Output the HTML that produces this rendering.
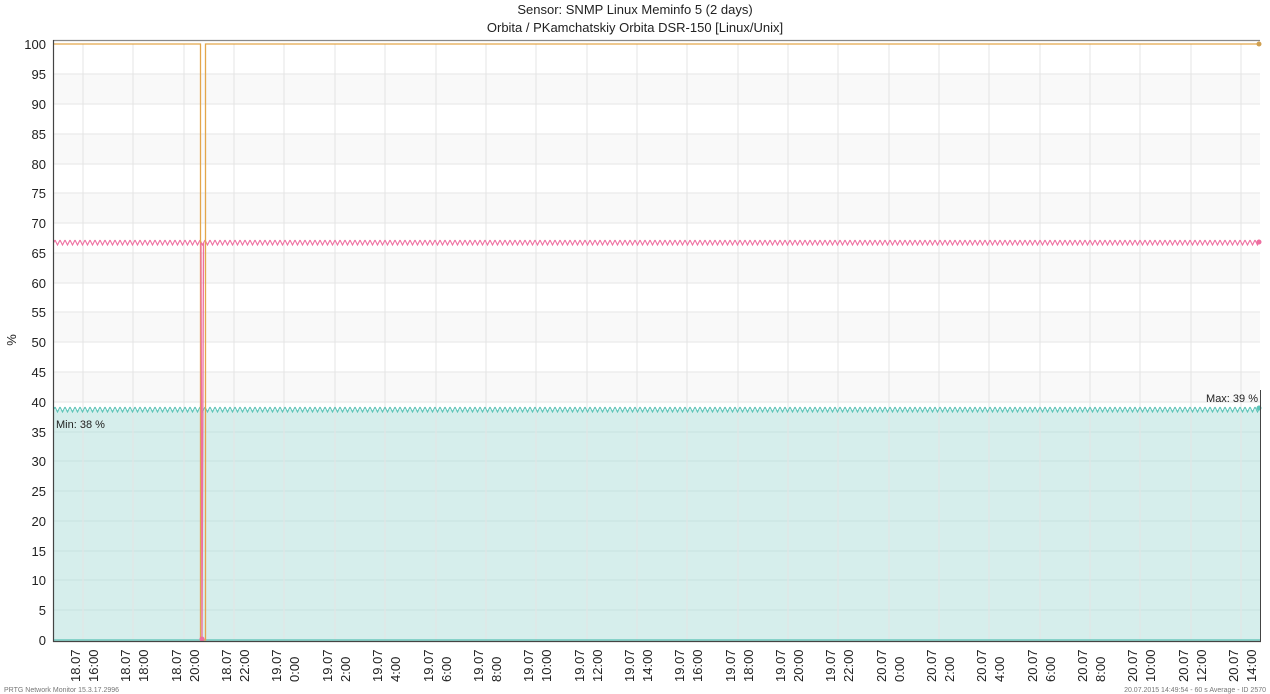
<!DOCTYPE html>
<html><head><meta charset="utf-8"><style>
html,body{margin:0;padding:0;background:#fff;width:1270px;height:694px;overflow:hidden}
svg{display:block;font-family:"Liberation Sans","DejaVu Sans",sans-serif}
</style></head><body>
<svg width="1270" height="694" viewBox="0 0 1270 694" xmlns="http://www.w3.org/2000/svg">
<defs>
<pattern id="zp" x="0" y="239" width="5" height="7" patternUnits="userSpaceOnUse">
<path d="M0,1 L2.5,6 L5,1" fill="none" stroke="#ee6fa0" stroke-width="1.1"/>
</pattern>
<pattern id="zt" x="0" y="406" width="5" height="7" patternUnits="userSpaceOnUse">
<path d="M0,1 L2.5,6 L5,1" fill="none" stroke="#5cc4b8" stroke-width="1.1"/>
</pattern>
</defs>
<text x="635" y="14" font-size="13" text-anchor="middle" fill="#222">Sensor: SNMP Linux Meminfo 5 (2 days)</text>
<text x="635" y="32" font-size="13" text-anchor="middle" fill="#222">Orbita / PKamchatskiy Orbita DSR-150 [Linux/Unix]</text>
<g fill="#f9f9f9">
<rect x="53" y="74" width="1207" height="30"/><rect x="53" y="134" width="1207" height="30"/>
<rect x="53" y="193" width="1207" height="30"/><rect x="53" y="253" width="1207" height="30"/>
<rect x="53" y="312" width="1207" height="30"/><rect x="53" y="372" width="1207" height="30"/>
</g>
<rect x="53" y="410" width="1207" height="230" fill="#d6eeec"/>
<g stroke="#e6e6e6" stroke-width="1">
<line x1="53" x2="1260" y1="74" y2="74"/><line x1="53" x2="1260" y1="104" y2="104"/><line x1="53" x2="1260" y1="134" y2="134"/><line x1="53" x2="1260" y1="164" y2="164"/><line x1="53" x2="1260" y1="193" y2="193"/><line x1="53" x2="1260" y1="223" y2="223"/><line x1="53" x2="1260" y1="253" y2="253"/><line x1="53" x2="1260" y1="283" y2="283"/><line x1="53" x2="1260" y1="312" y2="312"/><line x1="53" x2="1260" y1="342" y2="342"/><line x1="53" x2="1260" y1="372" y2="372"/><line x1="53" x2="1260" y1="402" y2="402"/>
</g>
<g stroke="#c8e2e0" stroke-width="1">
<line x1="53" x2="1260" y1="432" y2="432"/><line x1="53" x2="1260" y1="461" y2="461"/><line x1="53" x2="1260" y1="491" y2="491"/><line x1="53" x2="1260" y1="521" y2="521"/><line x1="53" x2="1260" y1="551" y2="551"/><line x1="53" x2="1260" y1="580" y2="580"/><line x1="53" x2="1260" y1="610" y2="610"/>
</g>
<g stroke="#e4e4e4" stroke-width="1">
<line x1="83" x2="83" y1="44" y2="640"/><line x1="133" x2="133" y1="44" y2="640"/><line x1="184" x2="184" y1="44" y2="640"/><line x1="234" x2="234" y1="44" y2="640"/><line x1="284" x2="284" y1="44" y2="640"/><line x1="335" x2="335" y1="44" y2="640"/><line x1="385" x2="385" y1="44" y2="640"/><line x1="436" x2="436" y1="44" y2="640"/><line x1="486" x2="486" y1="44" y2="640"/><line x1="536" x2="536" y1="44" y2="640"/><line x1="587" x2="587" y1="44" y2="640"/><line x1="637" x2="637" y1="44" y2="640"/><line x1="687" x2="687" y1="44" y2="640"/><line x1="738" x2="738" y1="44" y2="640"/><line x1="788" x2="788" y1="44" y2="640"/><line x1="838" x2="838" y1="44" y2="640"/><line x1="889" x2="889" y1="44" y2="640"/><line x1="939" x2="939" y1="44" y2="640"/><line x1="989" x2="989" y1="44" y2="640"/><line x1="1040" x2="1040" y1="44" y2="640"/><line x1="1090" x2="1090" y1="44" y2="640"/><line x1="1140" x2="1140" y1="44" y2="640"/><line x1="1191" x2="1191" y1="44" y2="640"/><line x1="1241" x2="1241" y1="44" y2="640"/>
</g>
<rect x="53" y="239" width="1207" height="7" fill="url(#zp)"/>
<rect x="53" y="406" width="1207" height="7" fill="url(#zt)"/>
<line x1="53" x2="1260" y1="640" y2="640" stroke="#6cc8bd" stroke-width="1.5"/>
<polyline points="53,44 200.5,44 200.5,640 205.5,640 205.5,44 1260,44" fill="none" stroke="#e3a64a" stroke-width="1.3"/>
<polyline points="201,243 202,639 203.5,243" fill="none" stroke="#ee6fa0" stroke-width="1.3"/>
<circle cx="202" cy="639" r="2.5" fill="#ee6fa0"/>
<circle cx="1259" cy="44" r="2.5" fill="#d0a050"/>
<circle cx="1259" cy="242" r="2.5" fill="#ee6fa0"/>
<circle cx="1259" cy="408" r="2.5" fill="#5cc4b8"/>
<line x1="53" x2="1260" y1="40.5" y2="40.5" stroke="#888" stroke-width="1.2"/>
<line x1="53.5" x2="53.5" y1="40" y2="642" stroke="#444" stroke-width="1.2"/>
<line x1="53" x2="1261" y1="641.5" y2="641.5" stroke="#444" stroke-width="1.2"/>
<line x1="1260.5" x2="1260.5" y1="390" y2="642" stroke="#444" stroke-width="1"/>
<text x="56" y="428" font-size="11" fill="#222">Min: 38 %</text>
<text x="1258" y="402" font-size="11" fill="#222" text-anchor="end">Max: 39 %</text>
<g font-size="13" fill="#222" text-anchor="end">
<text x="46" y="49">100</text><text x="46" y="79">95</text><text x="46" y="109">90</text><text x="46" y="139">85</text><text x="46" y="169">80</text><text x="46" y="198">75</text><text x="46" y="228">70</text><text x="46" y="258">65</text><text x="46" y="288">60</text><text x="46" y="317">55</text><text x="46" y="347">50</text><text x="46" y="377">45</text><text x="46" y="407">40</text><text x="46" y="437">35</text><text x="46" y="466">30</text><text x="46" y="496">25</text><text x="46" y="526">20</text><text x="46" y="556">15</text><text x="46" y="585">10</text><text x="46" y="615">5</text><text x="46" y="645">0</text>
</g>
<text x="16" y="340" font-size="13" fill="#222" transform="rotate(-90 16 340)" text-anchor="middle">%</text>
<g font-size="13" fill="#222" text-anchor="start">
<text transform="translate(80,682) rotate(-90)">18.07</text><text transform="translate(98,682) rotate(-90)">16:00</text>
<text transform="translate(130,682) rotate(-90)">18.07</text><text transform="translate(148,682) rotate(-90)">18:00</text>
<text transform="translate(181,682) rotate(-90)">18.07</text><text transform="translate(199,682) rotate(-90)">20:00</text>
<text transform="translate(231,682) rotate(-90)">18.07</text><text transform="translate(249,682) rotate(-90)">22:00</text>
<text transform="translate(281,682) rotate(-90)">19.07</text><text transform="translate(299,682) rotate(-90)">0:00</text>
<text transform="translate(332,682) rotate(-90)">19.07</text><text transform="translate(350,682) rotate(-90)">2:00</text>
<text transform="translate(382,682) rotate(-90)">19.07</text><text transform="translate(400,682) rotate(-90)">4:00</text>
<text transform="translate(433,682) rotate(-90)">19.07</text><text transform="translate(451,682) rotate(-90)">6:00</text>
<text transform="translate(483,682) rotate(-90)">19.07</text><text transform="translate(501,682) rotate(-90)">8:00</text>
<text transform="translate(533,682) rotate(-90)">19.07</text><text transform="translate(551,682) rotate(-90)">10:00</text>
<text transform="translate(584,682) rotate(-90)">19.07</text><text transform="translate(602,682) rotate(-90)">12:00</text>
<text transform="translate(634,682) rotate(-90)">19.07</text><text transform="translate(652,682) rotate(-90)">14:00</text>
<text transform="translate(684,682) rotate(-90)">19.07</text><text transform="translate(702,682) rotate(-90)">16:00</text>
<text transform="translate(735,682) rotate(-90)">19.07</text><text transform="translate(753,682) rotate(-90)">18:00</text>
<text transform="translate(785,682) rotate(-90)">19.07</text><text transform="translate(803,682) rotate(-90)">20:00</text>
<text transform="translate(835,682) rotate(-90)">19.07</text><text transform="translate(853,682) rotate(-90)">22:00</text>
<text transform="translate(886,682) rotate(-90)">20.07</text><text transform="translate(904,682) rotate(-90)">0:00</text>
<text transform="translate(936,682) rotate(-90)">20.07</text><text transform="translate(954,682) rotate(-90)">2:00</text>
<text transform="translate(986,682) rotate(-90)">20.07</text><text transform="translate(1004,682) rotate(-90)">4:00</text>
<text transform="translate(1037,682) rotate(-90)">20.07</text><text transform="translate(1055,682) rotate(-90)">6:00</text>
<text transform="translate(1087,682) rotate(-90)">20.07</text><text transform="translate(1105,682) rotate(-90)">8:00</text>
<text transform="translate(1137,682) rotate(-90)">20.07</text><text transform="translate(1155,682) rotate(-90)">10:00</text>
<text transform="translate(1188,682) rotate(-90)">20.07</text><text transform="translate(1206,682) rotate(-90)">12:00</text>
<text transform="translate(1238,682) rotate(-90)">20.07</text><text transform="translate(1256,682) rotate(-90)">14:00</text>
</g>
<text x="4" y="692" font-size="7" fill="#777">PRTG Network Monitor 15.3.17.2996</text>
<text x="1266" y="692" font-size="7" fill="#777" text-anchor="end">20.07.2015 14:49:54 - 60 s Average - ID 2570</text>
</svg>
</body></html>
